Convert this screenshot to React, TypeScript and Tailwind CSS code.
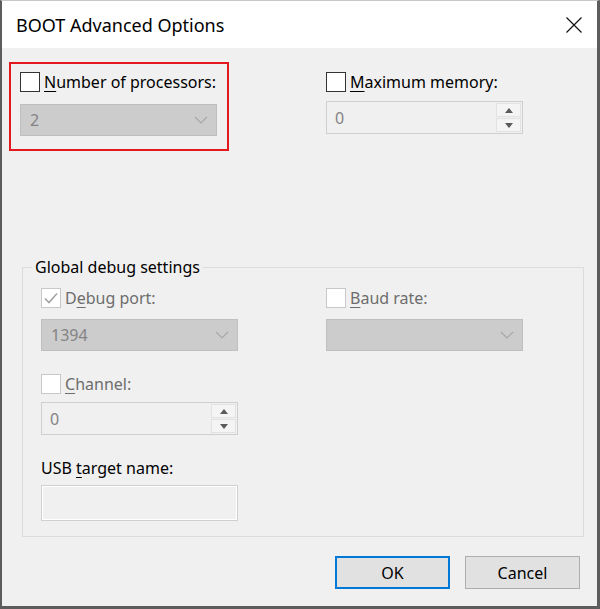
import React from "react";

const font = { fontFamily: '"Noto Sans", "Open Sans", sans-serif' };

function Key({ children }: { children: React.ReactNode }) {
  return <span className="underline decoration-1 underline-offset-[3px]">{children}</span>;
}

function CheckBox({ checked = false, disabled = false }: { checked?: boolean; disabled?: boolean }) {
  return (
    <div
      className={
        disabled
          ? "flex h-[20px] w-[20px] shrink-0 items-center justify-center border border-[#c8c8c8] bg-white"
          : "flex h-[20px] w-[20px] shrink-0 items-center justify-center border border-[#333333] bg-white"
      }
    >
      {checked && (
        <svg width="16" height="16" viewBox="0 0 16 16">
          <path d="M2 8.5 L6 12.5 L14 3.5" fill="none" stroke="#a3a3a3" strokeWidth="1.6" />
        </svg>
      )}
    </div>
  );
}

function CheckRow({
  label,
  checked,
  disabled,
}: {
  label: React.ReactNode;
  checked?: boolean;
  disabled?: boolean;
}) {
  return (
    <div className="flex h-[20px] items-center gap-[4px]">
      <CheckBox checked={checked} disabled={disabled} />
      <span className={disabled ? "leading-none text-[#6d6d6d]" : "leading-none text-black"}>{label}</span>
    </div>
  );
}

function Select({ value }: { value?: string }) {
  return (
    <div className="flex h-[32px] w-[197px] items-center justify-between border border-[#bfbfbf] bg-[#cccccc] pl-[9px] pr-[8px] text-[#838383]">
      <span>{value}</span>
      <svg width="14" height="8" viewBox="0 0 14 8">
        <path d="M1 1 L7 7 L13 1" fill="none" stroke="#a8a8a8" strokeWidth="1.2" />
      </svg>
    </div>
  );
}

function Spin({ value }: { value: string }) {
  return (
    <div className="flex h-[33px] w-[197px] border border-[#cfcfcf] bg-[#f0f0f0]">
      <div className="flex flex-1 items-center pl-[8px] text-[#838383]">{value}</div>
      <div className="flex w-[27px] flex-col gap-[1px] p-[1px]">
        <div className="flex flex-1 items-center justify-center border border-[#e2e2e2] bg-[#f4f4f4]">
          <svg width="8" height="5" viewBox="0 0 8 5">
            <path d="M0 5 L4 0 L8 5 Z" fill="#5a5a5a" />
          </svg>
        </div>
        <div className="flex flex-1 items-center justify-center border border-[#e2e2e2] bg-[#f4f4f4]">
          <svg width="8" height="5" viewBox="0 0 8 5">
            <path d="M0 0 L4 5 L8 0 Z" fill="#5a5a5a" />
          </svg>
        </div>
      </div>
    </div>
  );
}

export default function App() {
  return (
    <div
      className="flex h-[609px] w-[600px] flex-col border-t border-b-[3px] border-l-2 border-r-[3px] border-t-[#c8c8c8] border-b-[#5c5c5c] border-l-[#5c5c5c] border-r-[#5c5c5c] bg-[#f0f0f0] text-[16px] text-black"
      style={font}
    >
      <div className="flex h-[47px] shrink-0 items-center justify-between bg-white pl-[14px] pr-[14px]">
        <span className="text-[18px] leading-none">BOOT Advanced Options</span>
        <svg width="16" height="16" viewBox="0 0 16 16" className="mr-[1px]">
          <path d="M0.5 0.5 L15.5 15.5 M15.5 0.5 L0.5 15.5" stroke="#111" strokeWidth="1.2" />
        </svg>
      </div>

      <div className="flex flex-1 flex-col">
        <div className="flex items-start">
          <div className="ml-[7px] mt-[14px] h-[89px] w-[220px] border-2 border-[#e3181f] pl-[9px] pt-[8px]">
            <CheckRow label={<><Key>N</Key>umber of processors:</>} />
            <div className="mt-[12px]">
              <Select value="2" />
            </div>
          </div>
          <div className="ml-[97px] mt-[24px]">
            <CheckRow label={<><Key>M</Key>aximum memory:</>} />
            <div className="mt-[9px]">
              <Spin value="0" />
            </div>
          </div>
        </div>

        <fieldset className="ml-[20px] mt-[106px] w-[562px] border border-[#dcdcdc] pb-[15px] pl-[18px] pt-[11px]">
          <legend className="-ml-[9px] px-[3px] leading-[20px]">Global debug settings</legend>
          <div className="grid grid-cols-[197px_197px] gap-x-[88px]">
            <div className="flex flex-col">
              <CheckRow label={<>D<Key>e</Key>bug port:</>} checked disabled />
              <div className="mt-[11px]">
                <Select value="1394" />
              </div>
              <div className="mt-[23px]">
                <CheckRow label={<><Key>C</Key>hannel:</>} disabled />
              </div>
              <div className="mt-[8px]">
                <Spin value="0" />
              </div>
              <div className="mt-[23px] leading-[20px]">
                USB <Key>t</Key>arget name:
              </div>
              <div className="mt-[7px] h-[36px] w-[197px] border border-[#d0d0d0] bg-[#f0f0f0] shadow-[inset_0_0_0_1px_#ffffff]" />
            </div>
            <div className="flex flex-col">
              <CheckRow label={<><Key>B</Key>aud rate:</>} disabled />
              <div className="mt-[11px]">
                <Select />
              </div>
            </div>
          </div>
        </fieldset>

        <div className="mr-[17px] mt-[19px] flex justify-end gap-[15px]">
          <button className="h-[33px] w-[115px] border-2 border-[#0078d7] bg-[#e1e1e1] text-black">OK</button>
          <button className="h-[33px] w-[115px] border border-[#adadad] bg-[#e1e1e1] text-black">Cancel</button>
        </div>
      </div>
    </div>
  );
}
